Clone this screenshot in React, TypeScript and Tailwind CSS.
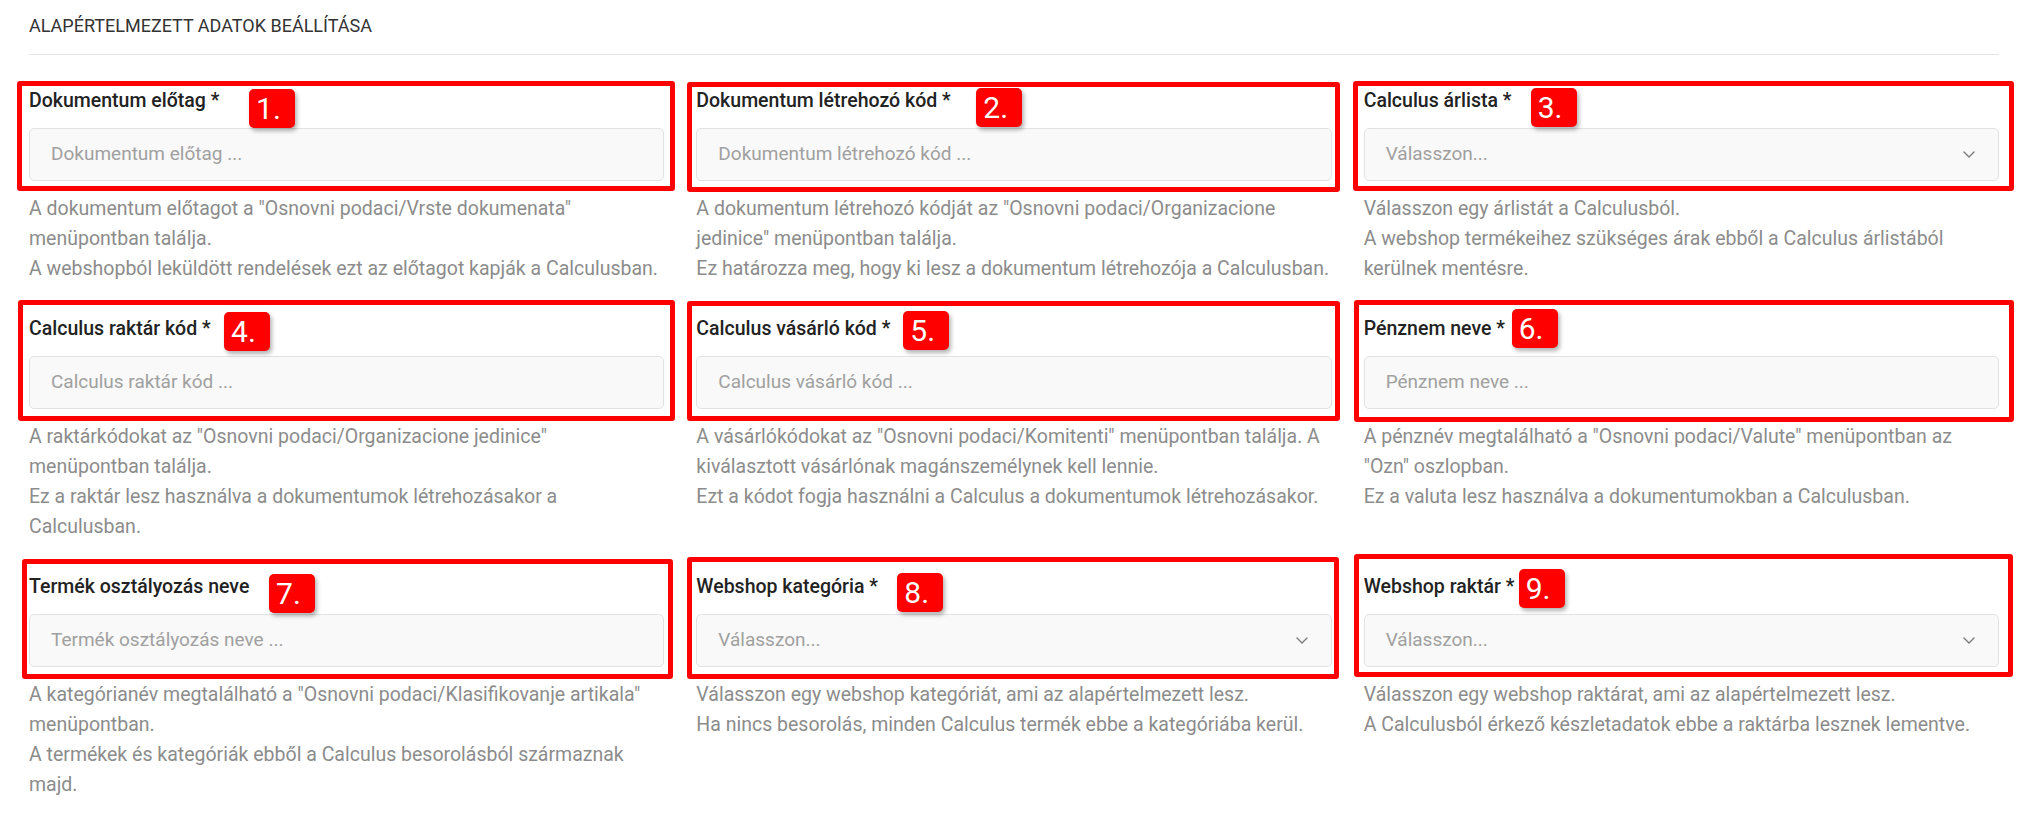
import React from 'react'

type Field = {
  label: string
  placeholder: string
  select?: boolean
  desc: string[]
  num: number
  box: string
  badge: string
}

const fields: Field[] = [
  {
    label: 'Dokumentum előtag *',
    placeholder: 'Dokumentum előtag ...',
    desc: [
      'A dokumentum előtagot a "Osnovni podaci/Vrste dokumenata"',
      'menüpontban találja.',
      'A webshopból leküldött rendelések ezt az előtagot kapják a Calculusban.',
    ],
    num: 1,
    box: 'left-[-12px] right-[-11px] top-[-5px] bottom-[-10px]',
    badge: 'left-[220px] top-[3px]',
  },
  {
    label: 'Dokumentum létrehozó kód *',
    placeholder: 'Dokumentum létrehozó kód ...',
    desc: [
      'A dokumentum létrehozó kódját az "Osnovni podaci/Organizacione',
      'jedinice" menüpontban találja.',
      'Ez határozza meg, hogy ki lesz a dokumentum létrehozója a Calculusban.',
    ],
    num: 2,
    box: 'left-[-9px] right-[-8px] top-[-4px] bottom-[-11px]',
    badge: 'left-[280px] top-[2px]',
  },
  {
    label: 'Calculus árlista *',
    placeholder: 'Válasszon...',
    select: true,
    desc: [
      'Válasszon egy árlistát a Calculusból.',
      'A webshop termékeihez szükséges árak ebből a Calculus árlistából',
      'kerülnek mentésre.',
    ],
    num: 3,
    box: 'left-[-11px] right-[-15px] top-[-5px] bottom-[-10px]',
    badge: 'left-[167px] top-[2px]',
  },
  {
    label: 'Calculus raktár kód *',
    placeholder: 'Calculus raktár kód ...',
    desc: [
      'A raktárkódokat az "Osnovni podaci/Organizacione jedinice"',
      'menüpontban találja.',
      'Ez a raktár lesz használva a dokumentumok létrehozásakor a',
      'Calculusban.',
    ],
    num: 4,
    box: 'left-[-11px] right-[-11px] top-[-14px] bottom-[-12px]',
    badge: 'left-[195px] top-[-2px]',
  },
  {
    label: 'Calculus vásárló kód *',
    placeholder: 'Calculus vásárló kód ...',
    desc: [
      'A vásárlókódokat az "Osnovni podaci/Komitenti" menüpontban találja. A',
      'kiválasztott vásárlónak magánszemélynek kell lennie.',
      'Ezt a kódot fogja használni a Calculus a dokumentumok létrehozásakor.',
    ],
    num: 5,
    box: 'left-[-9px] right-[-8px] top-[-13px] bottom-[-12px]',
    badge: 'left-[207px] top-[-3px]',
  },
  {
    label: 'Pénznem neve *',
    placeholder: 'Pénznem neve ...',
    desc: [
      'A pénznév megtalálható a "Osnovni podaci/Valute" menüpontban az',
      '"Ozn" oszlopban.',
      'Ez a valuta lesz használva a dokumentumokban a Calculusban.',
    ],
    num: 6,
    box: 'left-[-10px] right-[-15px] top-[-14px] bottom-[-13px]',
    badge: 'left-[148px] top-[-5px]',
  },
  {
    label: 'Termék osztályozás neve',
    placeholder: 'Termék osztályozás neve ...',
    desc: [
      'A kategórianév megtalálható a "Osnovni podaci/Klasifikovanje artikala"',
      'menüpontban.',
      'A termékek és kategóriák ebből a Calculus besorolásból származnak',
      'majd.',
    ],
    num: 7,
    box: 'left-[-7px] right-[-9px] top-[-13px] bottom-[-12px]',
    badge: 'left-[240px] top-[2px]',
  },
  {
    label: 'Webshop kategória *',
    placeholder: 'Válasszon...',
    select: true,
    desc: [
      'Válasszon egy webshop kategóriát, ami az alapértelmezett lesz.',
      'Ha nincs besorolás, minden Calculus termék ebbe a kategóriába kerül.',
    ],
    num: 8,
    box: 'left-[-9px] right-[-7px] top-[-15px] bottom-[-12px]',
    badge: 'left-[201px] top-[1px]',
  },
  {
    label: 'Webshop raktár *',
    placeholder: 'Válasszon...',
    select: true,
    desc: [
      'Válasszon egy webshop raktárat, ami az alapértelmezett lesz.',
      'A Calculusból érkező készletadatok ebbe a raktárba lesznek lementve.',
    ],
    num: 9,
    box: 'left-[-10px] right-[-14px] top-[-18px] bottom-[-10px]',
    badge: 'left-[155px] top-[-3px]',
  },
]

function Chevron() {
  return (
    <svg width="12" height="7" viewBox="0 0 12 7" fill="none" className="shrink-0">
      <path d="M1 1l5 5 5-5" stroke="#7a7a7a" strokeWidth="1.4" strokeLinecap="round" strokeLinejoin="round" />
    </svg>
  )
}

function FieldBlock({ f }: { f: Field }) {
  return (
    <div className="flex flex-col">
      <div className="relative">
        {/* annotation frame */}
        <div className={`absolute ${f.box} border-[5px] border-[#ff0000] rounded-[3px] pointer-events-none`} />
        <div
          className={`absolute ${f.badge} w-[46px] h-[39px] bg-[#ff0000] rounded-[5px] shadow-[2px_3px_4px_rgba(0,0,0,0.3)] flex items-center pl-[7px] text-white text-[30px] leading-none`}
        >
          {f.num}.
        </div>
        <div className="text-[19.5px] leading-[30px] font-medium text-[#222222] mb-[12px]">{f.label}</div>
        <div className="h-[53px] rounded-[5px] border border-[#e2e2e2] bg-[#f9f9f9] flex items-center justify-between pl-[21px] pr-[23px]">
          <span className="text-[19px] text-[#a0a0a0]">{f.placeholder}</span>
          {f.select && <Chevron />}
        </div>
      </div>
      <div className="mt-[13px] text-[19.5px] leading-[30px] text-[#8c8c8c]">
        {f.desc.map((line, i) => (
          <div key={i} className="whitespace-nowrap">
            {line}
          </div>
        ))}
      </div>
    </div>
  )
}

export default function App() {
  return (
    <div className="min-h-screen bg-white px-[29px] font-['Roboto',sans-serif]">
      <div className="pt-[13px] pb-[15px] border-b border-[#e3e3e3] text-[18px] leading-[26px] text-[#333333]">
        ALAPÉRTELMEZETT ADATOK BEÁLLÍTÁSA
      </div>
      <div className="mt-[31px] grid grid-cols-3 gap-x-[32px] gap-y-[30px]">
        {fields.map((f) => (
          <FieldBlock key={f.num} f={f} />
        ))}
      </div>
    </div>
  )
}
